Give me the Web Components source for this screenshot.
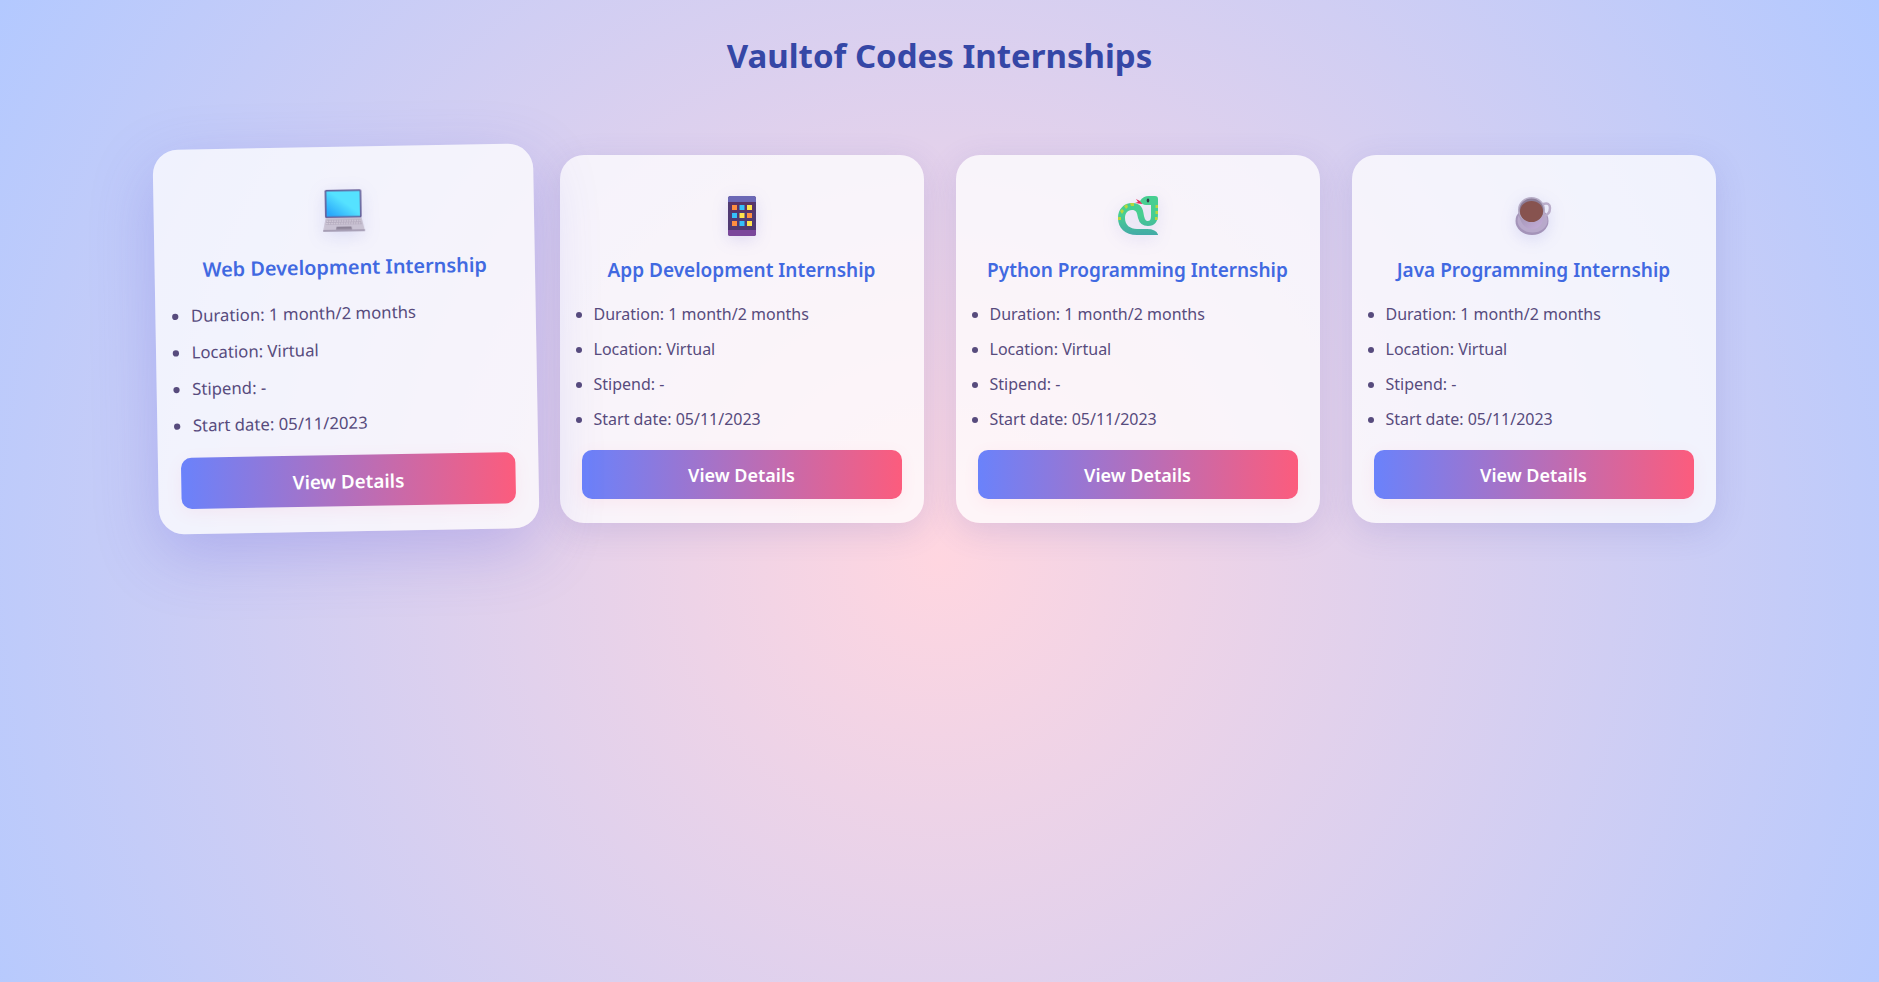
<!DOCTYPE html>
<html lang="en">
<head>
<meta charset="utf-8">
<title>Vaultof Codes Internships</title>
<style>
html, body { margin: 0; min-height: 100%; }
body { font-family: "Noto Sans", "Open Sans", sans-serif; }
</style>
</head>
<body>
<internship-page>
  <internship-card featured icon="laptop" heading="Web Development Internship"></internship-card>
  <internship-card icon="phone" heading="App Development Internship"></internship-card>
  <internship-card icon="snake" heading="Python Programming Internship"></internship-card>
  <internship-card icon="coffee" heading="Java Programming Internship"></internship-card>
</internship-page>
<script>
const icons = {
  laptop: `<defs><linearGradient id="s" x1="0" y1="1" x2="1" y2="0"><stop offset=".1" stop-color="#2aa9fb"/><stop offset=".55" stop-color="#55e2ff"/></linearGradient></defs>
    <rect x="2" y="0" width="35" height="27" rx="1.5" fill="#635994"/><rect x="3.500" y="1.500" width="32" height="24" fill="url(#s)"/>
    <path d="M2.500 27h34.500l3 12.500H0z" fill="#c9c2d3"/><path d="M3.500 28.500h32.500l1 5H2.500z" fill="#b3aabd"/>
    <path d="M3.500 30h32.500M3 32.300h33.500" stroke="#e2dce8" stroke-dasharray="1.600 .8"/>
    <path d="M13 35.500h14l.7 2.500H12.300z" fill="#8c8397"/><path d="M0 38.500h40V40H0z" fill="#9a90a9"/>`,
  phone: `<rect x="6" y="0" width="28" height="40" rx="2.500" fill="#503a72"/><path d="M6 6V2.500Q6 0 8.500 0h23Q34 0 34 2.500V6z" fill="#6b68b6"/>
    <path d="M6 34h28v3.500q0 2.500-2.500 2.500h-23Q6 40 6 37.500z" fill="#7b479b"/><path d="M8 6h24v10H8z" fill="#62305f" opacity=".6"/>
    <path d="M10 9h5v5h-5zM25 17h5v5h-5zM10 25h5v5h-5z" fill="#ff8f40"/><path d="M17.500 9h5v5h-5zM10 17h5v5h-5zM17.500 25h5v5h-5z" fill="#35c1fa"/><path d="M25 9h5v5h-5zM17.500 17h5v5h-5zM25 25h5v5h-5z" fill="#ffe34d"/>`,
  snake: `<defs><linearGradient id="g" x1="0" y1="0" x2="0" y2="1"><stop offset=".5" stop-color="#47ce91"/><stop offset="1" stop-color="#43aaa7"/></linearGradient></defs>
    <path d="M24 6l-6-3 2 3-3 1 7 1" fill="#e9295d"/>
    <path d="M22 5Q25 0 31 0h6q3 0 3 3v15q0 12-10 12-8 0-10-8c-1-6-2-8-6-8-5 0-7 4-7 8 0 7 5 11 12 11h10q9 0 11 5.500V39H19C7 39 0 32 0 22 0 13 6 7 14 7c9 0 11 5 12 13 1 4 2 5 4 5 3 0 3-3 3-7V9h-5q-4 0-6-4z" fill="url(#g)"/>
    <path d="M37.500 9H40v3h-2.500zM37.500 15H40v3h-2.500zM37 21h2.500v3H37zM12 7h4v3h-3zM6 10l3-2 1 3-2 2zM2 15l2-2 2 2-2 3zM0 21h3v3H0z" fill="#b8d63f"/><ellipse cx="30" cy="4.500" rx="1.300" ry="2" fill="#323b48"/>`,
  coffee: `<defs><linearGradient id="c" x1="0" y1="0" x2="1" y2="1"><stop stop-color="#9c91ad"/><stop offset="1" stop-color="#c6aedc"/></linearGradient></defs>
    <ellipse cx="18" cy="25" rx="16.500" ry="14" fill="#a494b9"/><ellipse cx="18.500" cy="24.500" rx="15" ry="12" fill="#b8a9cb"/><path d="M29 8q7-2 7 4 0 7-7 8" fill="none" stroke="#baadca" stroke-width="2.500"/>
    <path d="M4 13q2 20 14 20t13-20z" fill="url(#c)"/><ellipse cx="17.500" cy="13.500" rx="13.500" ry="12.500" fill="#b7adc6"/><ellipse cx="17.500" cy="14" rx="12" ry="11.500" fill="#8c7d98"/><ellipse cx="17.500" cy="15.500" rx="11.500" ry="10.500" fill="#87534f"/>`
};

customElements.define('internship-page', class extends HTMLElement {
  constructor() {
    super();
    this.attachShadow({ mode: 'open' }).innerHTML = `
<style>
:host { display: block; box-sizing: border-box; min-height: 100vh; padding: 32px; background: radial-gradient(circle at 50% 57%, #ffd6e0 0%, #b3c9ff 100%); }
h1 { margin: 0 0 76px; font-size: 33px; line-height: 47px; font-weight: 700; text-align: center; color: #3547a6; }
main { display: grid; grid-template-columns: repeat(auto-fit, 364px); justify-content: center; gap: 32px; }
</style>
<h1>Vaultof Codes Internships</h1>
<main><slot></slot></main>`;
  }
});

customElements.define('internship-card', class extends HTMLElement {
  connectedCallback() {
    if (this.shadowRoot) return;
    this.attachShadow({ mode: 'open' }).innerHTML = `
<style>
:host { display: block; box-sizing: border-box; padding: 41px 22px 24px; border-radius: 24px; background: rgba(255,255,255,.75); box-shadow: 0 8px 32px rgba(80,80,180,.16); }
:host([featured]) { transform: scale(1.045) rotate(-1deg); box-shadow: 0 20px 60px rgba(80,80,220,.25); }
svg { display: block; width: 40px; height: 40px; margin: 0 auto 20px; overflow: visible; filter: drop-shadow(0 4px 8px rgba(80,80,200,.15)); }
h2 { margin: 0 0 18px; font-size: 19px; line-height: 28px; font-weight: 600; text-align: center; color: #4169e1; white-space: nowrap; }
ul { margin: 0 0 18px; padding: 0 0 0 12px; color: #574b7d; font-size: 16px; line-height: 25px; }
li { margin-bottom: 10px; }
li:last-child { margin-bottom: 0; }
button { display: block; width: 100%; height: 49px; border: 0; border-radius: 10px; padding: 0; font: 600 18px/24px "Noto Sans", "Open Sans", sans-serif; color: #fff; background: linear-gradient(90deg, #6a82fb, #fc5c7d); box-shadow: 0 4px 16px rgba(252,92,125,.08); }
</style>
<svg viewBox="0 0 40 40" aria-hidden="true">${icons[this.getAttribute('icon')]}</svg>
<h2>${this.getAttribute('heading')}</h2>
<ul><li>Duration: 1 month/2 months</li><li>Location: Virtual</li><li>Stipend: -</li><li>Start date: 05/11/2023</li></ul>
<button type="button">View Details</button>`;
  }
});
</script>
</body>
</html>
